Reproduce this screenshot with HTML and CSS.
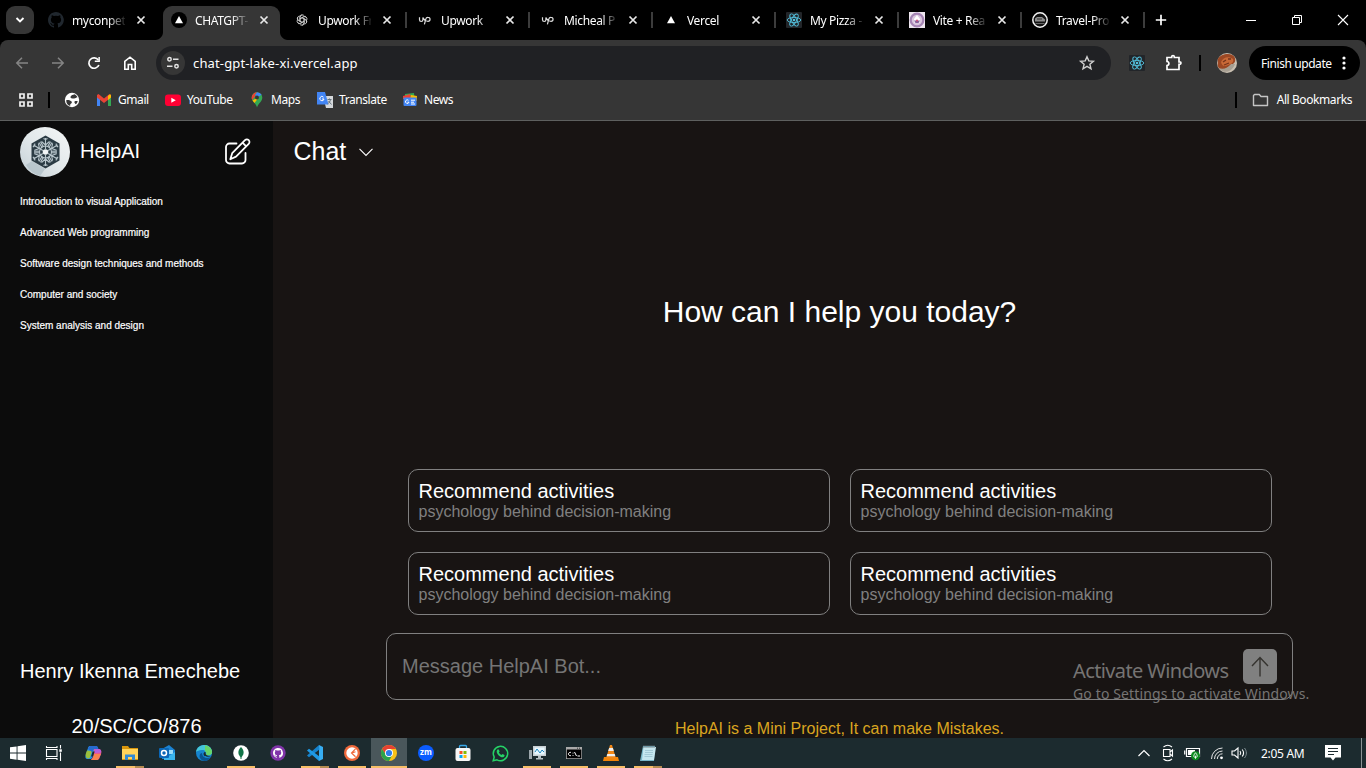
FILE: index.html
```html
<!DOCTYPE html>
<html lang="en">
<head>
<meta charset="utf-8">
<title>HelpAI</title>
<link rel="stylesheet" href="styles.css">
</head>
<body>
<svg width="0" height="0" class="defs">
  <defs>
    <symbol id="x" viewBox="0 0 16 16"><path d="M4.500 4.500l7 7M11.500 4.500l-7 7" stroke="#e8e8e8" stroke-width="1.700" fill="none"/></symbol>
    <symbol id="tri" viewBox="0 0 16 16"><path d="M8 4l4 7.200H4z" fill="#fff"/></symbol>
    <symbol id="cat" viewBox="0 0 16 16"><path d="M8 0C3.600 0 0 3.600 0 8c0 3.500 2.300 6.500 5.500 7.600.4.100.5-.2.500-.4v-1.500c-2.200.5-2.700-.9-2.700-.9-.4-.9-.9-1.200-.9-1.200-.7-.5.100-.5.100-.5.800.1 1.200.8 1.200.8.700 1.200 1.900.9 2.300.7.100-.5.300-.9.500-1.100-1.800-.2-3.600-.9-3.600-4 0-.9.300-1.600.8-2.100-.1-.2-.4-1 .1-2.100 0 0 .7-.2 2.200.8a7.500 7.500 0 014 0c1.500-1 2.200-.8 2.200-.8.400 1.100.2 1.900.1 2.100.5.600.8 1.300.8 2.100 0 3.100-1.900 3.700-3.700 3.900.3.300.6.800.6 1.500v2.200c0 .2.100.5.600.4A8 8 0 008 0z"/></symbol>
    <symbol id="up" viewBox="0 0 16 16"><path d="M2.500 5.300v2.500a1.700 1.700 0 003.400 0V5.600C6.700 7.500 7.500 8.600 8.900 9.200M7.400 12.400L8.800 7A2.200 2.200 0 0111 5.300a2 2 0 110 4.100C9.400 9.400 8.100 8.300 7.400 6.900" fill="none" stroke="#ddd" stroke-width="1.200"/></symbol>
    <symbol id="react" viewBox="0 0 16 16"><rect width="16" height="16" rx="1" fill="#222529"/><g fill="none" stroke="#53c1de" stroke-width=".9"><ellipse cx="8" cy="8" rx="6.800" ry="2.600"/><ellipse cx="8" cy="8" rx="6.800" ry="2.600" transform="rotate(60 8 8)"/><ellipse cx="8" cy="8" rx="6.800" ry="2.600" transform="rotate(120 8 8)"/></g><circle cx="8" cy="8" r="1.300" fill="#53c1de"/></symbol>
    <symbol id="gpt" viewBox="0 0 16 16"><g fill="none" stroke="#ccc" stroke-width="1"><g id="petal"><path d="M5.700 9.200V4.900A2.700 2.700 0 0110.700 3.500M5.700 6.600l3.900-2.300a2.700 2.700 0 013.700 1"/></g><use href="#petal" transform="rotate(60 8 8)"/><use href="#petal" transform="rotate(120 8 8)"/><use href="#petal" transform="rotate(180 8 8)"/><use href="#petal" transform="rotate(240 8 8)"/><use href="#petal" transform="rotate(300 8 8)"/></g></symbol>
  </defs>
</svg>

<header class="browser">
  <div class="tabstrip">
    <div class="tabmenu"><svg width="12" height="12" viewBox="0 0 12 12"><path d="M2.500 4l3.500 3.500L9.500 4" fill="none" stroke="#fff" stroke-width="1.900"/></svg></div>
    <div class="tab nosep"><svg class="fav" fill="#20272e"><use href="#cat"/></svg><span class="name">myconpet</span><svg class="close"><use href="#x"/></svg></div>
    <div class="tab active nosep"><svg class="fav"><circle cx="8" cy="8" r="8" fill="#000"/><use href="#tri"/></svg><span class="name">CHATGPT-</span><svg class="close"><use href="#x"/></svg></div>
    <div class="tab"><svg class="fav" viewBox="0 0 16 16"><g transform="translate(1 1) scale(.88)"><use href="#gpt" width="16" height="16"/></g></svg><span class="name">Upwork Fr</span><svg class="close"><use href="#x"/></svg></div>
    <div class="tab"><svg class="fav"><use href="#up"/></svg><span class="name">Upwork</span><svg class="close"><use href="#x"/></svg></div>
    <div class="tab"><svg class="fav"><use href="#up"/></svg><span class="name">Micheal P</span><svg class="close"><use href="#x"/></svg></div>
    <div class="tab"><svg class="fav"><use href="#tri"/></svg><span class="name">Vercel</span><svg class="close"><use href="#x"/></svg></div>
    <div class="tab"><svg class="fav"><use href="#react"/></svg><span class="name">My Pizza -</span><svg class="close"><use href="#x"/></svg></div>
    <div class="tab"><svg class="fav" viewBox="0 0 16 16"><path fill="#eee6ef" d="M0 0h16v16H0z"/><circle cx="8" cy="8" r="6.300" fill="#d9c6dd" stroke="#a584b4" stroke-width="2.200"/><path d="M8 3l3 4v3.500H5V7z" fill="#fff"/><path d="M5 8.500h6L9.500 11h-3z" fill="#85629c"/><circle cx="8" cy="8.500" r="1" fill="#d14e77"/></svg><span class="name">Vite + Rea</span><svg class="close"><use href="#x"/></svg></div>
    <div class="tab"><svg class="fav" viewBox="0 0 16 16"><circle cx="8" cy="8" r="7.200" fill="#121212" stroke="#f3f3f3" stroke-width="1.500"/><path d="M3 6.500l2-1.500h5l3 2.500v2H3z" fill="#8c8c8c"/><path d="M3.500 11.500h9" stroke="#666"/><path d="M5 7h5" stroke="#333"/></svg><span class="name">Travel-Pro</span><svg class="close"><use href="#x"/></svg></div>
    <svg class="plus" width="14" height="14"><path d="M7 1.800v10.400M1.800 7h10.400" stroke="#fff" stroke-width="1.700"/></svg>
    <div class="wincontrols">
      <svg width="12" height="12"><path d="M1 6.500h10" stroke="#fff"/></svg>
      <svg width="12" height="12"><path d="M1.500 3.500h7v7h-7zM3.500 3.500v-2h7v7h-2" stroke="#fff" fill="none"/></svg>
      <svg width="12" height="12"><path d="M1 1l10 10M11 1L1 11" stroke="#fff" stroke-width="1.100"/></svg>
    </div>
  </div>

  <div class="toolbar">
    <div class="nav">
      <svg width="16" height="16"><path d="M14 8H3M8 2.800L2.800 8 8 13.200" fill="none" stroke="#858585" stroke-width="1.500"/></svg>
      <svg width="16" height="16"><path d="M2 8h11M8 2.800L13.200 8 8 13.200" fill="none" stroke="#858585" stroke-width="1.500"/></svg>
      <svg width="16" height="16"><path d="M12.900 10A5.200 5.200 0 1112.300 5" fill="none" stroke="#fff" stroke-width="1.700"/><path d="M13.900 2v5H8.800V5.600h3.600V2z" fill="#fff"/></svg>
      <svg width="16" height="16"><path d="M2.800 6.300L8 2.200l5.200 4.100v7.900H9.700V9.500H6.300v4.700H2.800z" fill="none" stroke="#fff" stroke-width="1.600"/></svg>
    </div>
    <div class="omnibox">
      <span class="siteinfo"><svg width="14" height="14"><g fill="none" stroke="#e3e3e3" stroke-width="1.500"><circle cx="3.500" cy="3.300" r="1.700"/><path d="M7 3.300h5.500M1 10.200h5.500"/><circle cx="10.500" cy="10.200" r="1.700"/></g></svg></span>
      <span class="url">chat-gpt-lake-xi.vercel.app</span>
      <svg width="16" height="16" class="star"><path d="M8 1.700l1.800 4.200 4.600.4-3.500 3 1.100 4.500L8 11.400l-4 2.400 1.100-4.500-3.500-3 4.600-.4z" fill="none" stroke="#d0d0d0" stroke-width="1.400"/></svg>
    </div>
    <svg class="ext" width="16" height="16"><use href="#react"/></svg>
    <svg class="puzzle" width="18" height="18"><path d="M2 3.500h4.700V2.800a1.300 1.300 0 012.600 0v.7H14v4.300h.7a1.300 1.300 0 010 2.600H14v5.100H2v-4c2.500-.2 2.500-3.700 0-4z" fill="none" stroke="#fff" stroke-width="1.700"/></svg>
    <i class="vbar tbar"></i>
    <svg class="avatar" width="20" height="20" viewBox="0 0 20 20"><circle cx="10" cy="10" r="10" fill="#c9bfb1"/><path d="M.8 6C4 0 16-1 18 5c1 4-1 6-5 7.500C9 17 3 19 .8 13z" fill="#9c4824"/><path d="M4 9c2-5 8-6 12-3 1 3-1 5-5 6-4 2-6 1-7-3z" fill="#c96a38"/><path d="M6 9l3-2M11 6l3 0M7 12l5-2" stroke="#73331c" stroke-width="1.300"/><path d="M2 15c4 2 9 0 12-4l4 0c-2 6-10 12-16 4z" fill="#a79f92"/></svg>
    <div class="update"><span>Finish update</span><svg width="4" height="16"><g fill="#fff"><circle cx="2" cy="3" r="1.600"/><circle cx="2" cy="8" r="1.600"/><circle cx="2" cy="13" r="1.600"/></g></svg></div>
  </div>

  <div class="bookmarks">
    <svg class="grid" width="16" height="16"><path d="M2 2h4v4H2zM10 2h4v4h-4zM2 10h4v4H2zM10 10h4v4h-4z" fill="none" stroke="#f1f1f1" stroke-width="1.700"/></svg>
    <i class="vbar"></i>
    <svg class="globe" width="16" height="16"><circle cx="8" cy="8" r="7.200" fill="#fff"/><path d="M2.200 8.200c2.300-.5 3.600.3 5 1 1.200.7.700 2-.4 2.600-.8.500-.6 1.500-.6 2.200C3.800 13.300 2 11 2.200 8.200zM6.500 4.800c.7-1.600 2.500-2 4-2.500 1.200.5 2.400 1.700 3 3-1.500.2-2 1.200-3.300 1.300S6 6.500 6.500 4.800zM10.500 9.500c1-.8 2.200-.5 3.200-.5-.2 1.200-.8 2.300-1.700 3.200-1-.5-2-1.700-1.500-2.700z" fill="#363636"/></svg>
    <span class="bm gmail"><svg width="16" height="16"><path d="M1 4v10h3V7z" fill="#4285f4"/><path d="M12 7v7h3V4z" fill="#34a853"/><path d="M1 3l1.500-1L8 6.600 13.500 2l1.500 1v2.500L8 11 1 5.500z" fill="#ea4335"/><path d="M12 4v4l3-2.500V3.500C15 2 13.500 2 12 4z" fill="#fbbc04"/></svg><b>Gmail</b></span>
    <span class="bm yt"><svg width="16" height="16"><rect y="2.500" width="16" height="11.500" rx="3" fill="#f03"/><path d="M6.300 5.800v5l4.500-2.500z" fill="#fff"/></svg><b>YouTube</b></span>
    <span class="bm maps"><svg width="16" height="16"><path d="M2.700 5.500a5.300 5.300 0 0110.600 0c0 4.500-4.100 5.500-5.300 10-.8-4.500-5.300-5.500-5.300-10z" fill="#34a853"/><path d="M4 2.200A5.300 5.300 0 018 .2L5 5z" fill="#ea4335"/><path d="M4 2.200L6.500 4l-3.300 4A5.500 5.500 0 014 2.200z" fill="#ea4335"/><path d="M8 .2a5.300 5.300 0 014.600 2.600L9 5 6 3z" fill="#4285f4"/><path d="M3.500 8.500L10 5l-4.500 6z" fill="#fbbc04"/><circle cx="8" cy="5.600" r="2" fill="#363636"/></svg><b>Maps</b></span>
    <span class="bm trans"><svg width="16" height="16"><path d="M6 4h10v12H9z" fill="#d5d8db"/><path d="M0 0h8l3.500 12.500H0z" fill="#4285f4"/><path d="M6.500 5.200A2.100 2.100 0 107 7H5" fill="none" stroke="#fff" stroke-width="1"/><path d="M10.500 7.500h4M12.500 6.500v1M13.500 7.500c-.3 2-1.500 3.500-3 4.500M11.500 9l3 3.500" fill="none" stroke="#64727d"/></svg><b>Translate</b></span>
    <span class="bm news"><svg width="16" height="16"><path d="M3 2l9-1 .5 5H3z" fill="#34a853"/><path d="M1 4l7-2 2 5H1z" fill="#ea4335"/><path d="M9 3l6 1-.5 5H8z" fill="#fbbc04"/><rect x="1.500" y="5.500" width="13" height="8.500" rx="1" fill="#4285f4"/><path d="M6.500 8.300A1.800 1.800 0 107 10.200H5.500M9 8.200h4M9 10.200h3M9 12h4" fill="none" stroke="#fff" stroke-width="1"/></svg><b>News</b></span>
    <div class="allbm"><i class="vbar"></i><svg width="18" height="16"><path d="M2.500 2.500h4.800l1.700 2h6.500v9H1.500v-10z" fill="none" stroke="#c5c5c5" stroke-width="1.400" stroke-linejoin="round"/></svg><b>All Bookmarks</b></div>
  </div>
</header>

<div class="app">
  <aside class="side">
    <div class="brand">
      <svg class="logo" width="50" height="50" viewBox="0 0 50 50"><defs><linearGradient id="lg" x1="0" y1="1" x2="1" y2="0"><stop offset="0" stop-color="#c4d0d6"/><stop offset=".5" stop-color="#e3e9eb"/><stop offset="1" stop-color="#f4f6f6"/></linearGradient></defs><circle cx="25" cy="25" r="25" fill="url(#lg)"/><path d="M12 34l13 8-5 7A25 25 0 016 38z" fill="#a9b9c2" opacity=".6"/><path d="M25.500 8.500l14 8v17l-14 8-14-8v-17z" fill="#2b3b44"/><g fill="none" stroke="#b9c6cc" stroke-width="1.100"><path id="arm" d="M25.500 22v-11M25.500 18l-4-3.500M25.500 18l4-3.500M22 20.500l-3-5M29 20.500l3-5M25.500 12.500l-2-1M25.500 12.500l2-1"/><use href="#arm" transform="rotate(60 25.500 25)"/><use href="#arm" transform="rotate(120 25.500 25)"/><use href="#arm" transform="rotate(180 25.500 25)"/><use href="#arm" transform="rotate(240 25.500 25)"/><use href="#arm" transform="rotate(300 25.500 25)"/><circle cx="25.500" cy="25" r="6"/></g><circle cx="25.500" cy="25" r="2.800" fill="#f2f5f6"/></svg>
      <span class="title">HelpAI</span>
      <svg class="edit" width="28" height="28" viewBox="0 0 28 28"><g fill="none" stroke="#fff" stroke-width="1.800" stroke-linejoin="round" stroke-linecap="round"><path d="M12.500 5.500H5.500A3.500 3.500 0 002 9v13a3.500 3.500 0 003.500 3.500h12.500a3.500 3.500 0 003.500-3.500v-7"/><path d="M6.300 21.200l1.900-6L21 2.200a2.600 2.600 0 013.700 3.700L12 18.600zM18.500 4.600l3.700 3.700"/></g></svg>
    </div>
    <ul class="history">
      <li>Introduction to visual Application</li>
      <li>Advanced Web programming</li>
      <li>Software design techniques and methods</li>
      <li>Computer and society</li>
      <li>System analysis and design</li>
    </ul>
    <div class="owner"><p>Henry Ikenna Emechebe</p><p class="reg">20/SC/CO/876</p></div>
  </aside>
  <main class="main">
    <div class="chathead"><span>Chat</span><svg width="16" height="16"><path d="M1.500 4.900L8 11.400l6.500-6.500" fill="none" stroke="#fff" stroke-width="1.100"/></svg></div>
    <div class="welcome">
      <h1>How can I help you today?</h1>
      <div class="cards">
        <div class="card"><h2>Recommend activities</h2><p>psychology behind decision-making</p></div>
        <div class="card"><h2>Recommend activities</h2><p>psychology behind decision-making</p></div>
        <div class="card"><h2>Recommend activities</h2><p>psychology behind decision-making</p></div>
        <div class="card"><h2>Recommend activities</h2><p>psychology behind decision-making</p></div>
      </div>
      <div class="composer"><span>Message HelpAI Bot...</span><div class="send"><svg width="20" height="22"><path d="M10 20.500V2M2 10l8-8.500 8 8.500" fill="none" stroke="#35332f" stroke-width="1.400"/></svg></div></div>
      <p class="note">HelpAI is a Mini Project, It can make Mistakes.</p>
    </div>
  </main>
  <div class="watermark"><p class="w1">Activate Windows</p><p class="w2">Go to Settings to activate Windows.</p></div>
</div>

<footer class="taskbar">
  <div class="task"><svg width="16" height="16"><path d="M0 2.300L6.600 1.400v6.200H0zM7.500 1.200L16 0v7.600H7.500zM0 8.500h6.600v6.200L0 13.800zM7.500 8.500H16V16l-8.500-1.200z" fill="#fff"/></svg></div>
  <div class="task tv"><svg width="16" height="16"><g fill="none" stroke="#fff" stroke-width="1.100"><path d="M.5 4.500h10.500v7H.5zM.5 1v1.500H11V1M.5 15v-1.500H11V15M14.500 0v3.500M14.500 7.500V16"/></g><path d="M13.300 4.300h2.500v2.500h-2.500z" fill="#fff"/></svg></div>
  <div class="task"><svg width="18" height="18" viewBox="0 0 18 18"><path d="M6 2h6c1 0 1.500 1 2 2.500L11 6 8.500 13c-.5 1.500-1 2-3 2H4c-3 0-3-2-2-5l2-6c.5-1.500 1-2 2-2z" fill="#2490e6"/><path d="M1.700 10l1.300-3.500L8 7l-2 6.500C5 15.500 1 15 1.700 10z" fill="#9bbf3c"/><path d="M6.500 2H12c1.500 0 2 1 2.500 3H10L8 8 4 5c.5-1.500 1-3 2.500-3z" fill="#276acf"/><path d="M10 5h4c3 0 4 2 3 5l-1.500 4c-.5 1.500-1.500 2-3 2H7l2-3z" fill="#e8578e"/><path d="M7 16c2-1 2-3 3-6l7 0-2 4c-.5 1.500-1.500 2-3 2z" fill="#f78250"/><path d="M10.500 5h4c2 0 3 1.500 2.500 3.500L11 9z" fill="#b65edc"/><path d="M8.700 7.500h2L9 12.500H7z" fill="#1c2b2f"/></svg></div>
  <div class="task run two"><svg width="17" height="16"><path d="M0 1h6l1.500 2H16v12H0z" fill="#d8960d"/><path d="M0 4h16v10H0z" fill="#ffd35a"/><path d="M3 15V9.500h10V15h-3v-3H6v3z" fill="#3289d2"/></svg></div>
  <div class="task"><svg width="17" height="16"><path d="M3 4l7-4 6 5v9H3z" fill="#1b83d3"/><path d="M5 5h9v4H5z" fill="#9bdcf8"/><path d="M5 8l5 3 6-4v8H5z" fill="#39b5ed"/><rect y="3" width="10" height="10" rx="1" fill="#0a67b7"/><circle cx="5" cy="8" r="2.500" fill="none" stroke="#fff" stroke-width="1.500"/></svg></div>
  <div class="task"><svg width="16" height="16"><circle cx="8" cy="8" r="8" fill="#1584ce"/><path d="M0 7C1-1 14-3 16 6c.5 4-3 5-6 4 1-3-1-5-4-5S1 6 0 7z" fill="#45c6d8"/><path d="M9 .2C13 1 15 3 16 6c.5 4-3 5-6 4 1-2 0-3-1-4z" fill="#67d569"/><path d="M6 8c0 4 4 6 8.500 4.500C12 17 6 17 4 13 3 11 4 8 6 8z" fill="#0a5390"/><path d="M9.500 7c-2 0-2.500 2-1.500 3.500S13 12 15 11c-2 0-6 0-5.500-4z" fill="#1c2b2f"/></svg></div>
  <div class="task run"><svg width="16" height="16"><circle cx="8" cy="8" r="7.800" fill="#fff"/><path d="M8 2c4 4 3 8 0 10.500C5 10 4 6 8 2z" fill="#127448"/><path d="M8 9v5" stroke="#127448"/></svg></div>
  <div class="task"><svg width="16" height="16" viewBox="0 0 16 16"><circle cx="8" cy="8" r="7.700" fill="#8034a9"/><g transform="translate(3 3) scale(.63)" fill="#fff"><use href="#cat" width="16" height="16"/></g></svg></div>
  <div class="task run two"><svg width="17" height="16"><path d="M12 0l4 2v12l-4 2z" fill="#37aef3"/><path d="M12 0L0 10.500l2 1.700L12.500 4.500z" fill="#1683cc"/><path d="M12 16L0 5.500l2-1.700 10.500 7.700z" fill="#1f99e4"/></svg></div>
  <div class="task run"><svg width="16" height="16"><circle cx="8" cy="8" r="8" fill="#f0693b"/><circle cx="8" cy="8" r="5.700" fill="#fff"/><path d="M11.500 3.800L7.500 8l4 3.800M8 8l3.500-1.200" fill="none" stroke="#f0693b" stroke-width="1.200"/></svg></div>
  <div class="task current"><svg width="16" height="16"><circle cx="8" cy="8" r="8" fill="#fbc116"/><path d="M1.070 4A8 8 0 0114.930 4H8L5 9.700z" fill="#e64234"/><path d="M1.070 4A8 8 0 008 16l3.500-6.200H5z" fill="#2ba24c"/><circle cx="8" cy="8" r="4" fill="#fff"/><circle cx="8" cy="8" r="3.100" fill="#2e7de9"/></svg></div>
  <div class="task"><span class="zoomapp">zm</span></div>
  <div class="task"><svg width="16" height="16"><path d="M4.500 4V1.500a1 1 0 011-1h5a1 1 0 011 1V4" fill="none" stroke="#38a8e8" stroke-width="1.300"/><rect x=".5" y="3" width="15" height="13" rx="2" fill="#f7f7f7"/><path fill="#f35325" d="M4.500 6H7.500v3h-3z"/><path fill="#81bc06" d="M8.500 6h3v3h-3z"/><path fill="#05a6f0" d="M4.500 10h3v3h-3z"/><path fill="#ffba08" d="M8.500 10h3v3h-3z"/></svg></div>
  <div class="task"><svg width="17" height="17"><path d="M1.200 15.800l1-3.800A7.200 7.200 0 115 14.800z" fill="none" stroke="#25d366" stroke-width="1.500"/><path d="M5.500 4.500h1.300l.8 2-.8 1c.6 1.200 1.500 2 2.700 2.500l1-1 2 1v1c-.7 1.500-2.500 1.500-4 .7C6.300 10.500 5 8.500 4.700 7c0-1 .2-2 .8-2.500z" fill="#25d366"/></svg></div>
  <div class="task run"><svg width="17" height="16"><path d="M0 5h3v9H0z" fill="#9ca6ab"/><path d="M4 1h13v10H4z" fill="#c8d0d4"/><path d="M5.500 2.500h10v7h-10z" fill="#e7f8ff"/><path d="M6 7l2-3 3 4 2-3 2 2" fill="none" stroke="#2387bd"/><path d="M9 11h3v2h2v1.500H7V13h2z" fill="#b6bfc3"/></svg></div>
  <div class="task run"><svg width="16" height="14"><path d="M0 1h16v12H0z" fill="#aaa"/><path d="M.8 3.500h14.500v8.800H.8z" fill="#000"/><path d="M5 6.500a1.700 1.700 0 100 3M7 6.700v.8M7 9v.8M8.500 6l2 4M11.500 10h2.500" fill="none" stroke="#fff"/><path d="M11 2.200h1M13 2.200h1" stroke="#333"/></svg></div>
  <div class="task run"><svg width="16" height="16"><path d="M1 12h14l1 4H0z" fill="#f28408"/><path d="M7 0h2l4 13.500H3z" fill="#f18717"/><path d="M6.100 3h3.800l.9 3H5.200zM4.300 9h7.400l.7 2.200H3.600z" fill="#eee"/></svg></div>
  <div class="task run two"><svg width="17" height="16"><path d="M3 1h12l-1 15H0z" fill="#78b7c8"/><path d="M3.500 2H16l-2 13H2z" fill="#c5e7ef"/><path d="M4 0v3M6 0v3M8 0v3M10 0v3M12 0v3M14 0v3" stroke="#626d72" stroke-width=".8"/><path d="M5 5.500h8M5 7.500h8M4.500 9.500h8M4.500 11.500h8" stroke="#8bb7c4" stroke-width=".6"/></svg></div>
  <div class="tray">
    <svg width="14" height="14"><path d="M1.500 10L7 4.500l5.500 5.500" fill="none" stroke="#fff" stroke-width="1.200"/></svg>
    <svg class="meet" width="14" height="18"><path d="M2.500 5.500h6.500v7H2.500zM9 8l2.500-2v6L9 10M2.500 3C5 1 8.500 1 11 3M2.500 15c2.500 2 6 2 8.500 0" fill="none" stroke="#fff" stroke-width="1.100"/></svg>
    <svg class="bat" width="17" height="14"><path d="M2.500 2.500h13v8h-13zM.7 4.500v4" fill="none" stroke="#fff" stroke-width="1.200"/><path d="M4 4h7v5H4z" fill="#fff"/><circle cx="11.500" cy="9.700" r="4.500" fill="#0c8a20"/><path d="M11.500 6.700c2.500 3 2 4.500 0 5-2-.5-2.500-2 0-5zM11.500 9.700v3" fill="none" stroke="#fff" stroke-width=".9"/></svg>
    <svg class="wifi" width="14" height="14"><g fill="none" stroke="#e6e6e6" stroke-width="1"><path d="M1.500 13A11 11 0 0112.500 2M4.500 13a8 8 0 018-8M7.300 13a5.200 5.200 0 015.200-5.200"/></g><circle cx="11.500" cy="11.800" r="1.400" fill="#fff"/></svg>
    <svg class="vol" width="17" height="14"><path d="M1 5h2.500L7 2v10L3.500 9H1zM9 5c1 1.300 1 2.700 0 4M11.200 3.500c1.800 2.300 1.800 4.700 0 7" fill="none" stroke="#fff" stroke-width="1.100"/><path d="M13.500 2c2.500 3.300 2.500 6.700 0 10" fill="none" stroke="#839095"/></svg>
    <span class="clock">2:05 AM</span>
    <svg class="notif" width="16" height="16"><path d="M0 0h16v12.500h-5.500L8 15.500l-2.500-3H0z" fill="#fff"/><path d="M3 3.500h10M3 6.500h10M3 9.500h6" stroke="#1c2b2f"/></svg>
    <i class="peek"></i>
  </div>
</footer>
</body>
</html>
```
FILE: styles.css
```css
* { box-sizing: border-box; margin: 0; padding: 0; }
body { width: 1366px; height: 768px; overflow: hidden; display: flex; flex-direction: column; background: #000; color: #fff; font-family: "Liberation Sans", Arial, sans-serif; }
svg { display: block; flex: none; overflow: visible; }
.defs { position: absolute; }
i { flex: none; }
.browser { height: 121px; flex: none; border-bottom: 1px solid #5e605f; font: 12px "Noto Sans", sans-serif; letter-spacing: -.35px; background: #363636; }
.browser b { font-weight: 400; }

.tabstrip { height: 40px; display: flex; align-items: center; background: #000; padding-left: 6px; }
.tabmenu { width: 28px; height: 28px; border-radius: 9px; background: #363636; display: grid; place-items: center; margin-right: 6px; }
.tab { width: 123px; height: 34px; margin-top: 6px; padding: 0 0 6px 8px; display: flex; align-items: center; flex: none; background: linear-gradient(#3c3c3c, #3c3c3c) no-repeat 119px 6px / 2px 16px; }
.tab.nosep { background: none; }
.tab.active { position: relative; background: none; z-index: 0; }
.tab.active::before { content: ""; position: absolute; z-index: -1; left: 0; top: 0; width: 117px; height: 34px; background: #363636; border-radius: 9px 9px 0 0; }
.tab.active::after { content: ""; position: absolute; z-index: -1; left: -8px; bottom: 0; width: 133px; height: 8px; background: radial-gradient(circle at 0 0, transparent 7.500px, #363636 8.500px) no-repeat left / 8px 8px, radial-gradient(circle at 100% 0, transparent 7.500px, #363636 8.500px) no-repeat right / 8px 8px; }
.fav { width: 16px; height: 16px; }
.name { width: 53px; margin-left: 8px; white-space: nowrap; -webkit-mask-image: linear-gradient(90deg, #000 36px, transparent 55px); mask-image: linear-gradient(90deg, #000 36px, transparent 55px); }
.close { width: 16px; height: 16px; margin-left: 8px; }
.plus { margin-left: 7px; }
.wincontrols { margin-left: auto; display: flex; gap: 34px; padding-right: 17px; }

.toolbar { height: 46px; display: flex; align-items: center; padding-left: 14px; background: #363636; border-radius: 8px 8px 0 0; box-shadow: 0 -8px 0 0 #000; }
.nav { display: flex; gap: 20px; width: 142px; }
.omnibox { width: 955px; height: 34px; border-radius: 17px; background: #202124; display: flex; align-items: center; padding: 0 16px 0 5px; }
.siteinfo { width: 24px; height: 24px; border-radius: 50%; background: #363636; display: grid; place-items: center; }
.url { font-size: 13px; margin-left: 8px; letter-spacing: .14px; }
.star { margin-left: auto; }
.ext { margin-left: 18px; }
.puzzle { margin-left: 20px; }
.vbar { width: 2px; height: 16px; background: #000; display: block; }
.tbar { margin-left: 16px; }
.avatar { margin-left: 16px; }
.update { margin-left: 12px; width: 111px; height: 34px; border-radius: 17px; background: #000; display: flex; align-items: center; justify-content: space-between; padding: 0 14px 0 12px; white-space: nowrap; letter-spacing: -.42px; }

.bookmarks { height: 34px; padding: 0 14px 7px 18px; display: flex; align-items: center; white-space: nowrap; letter-spacing: -.42px; }
.grid { margin-right: 14px; }
.globe { margin-left: 14px; }
.bm { display: flex; gap: 6px; align-items: center; flex: none; }
.gmail { margin-left: 16px; width: 69px; }
.yt { width: 84px; }
.maps { width: 68px; }
.trans { width: 85px; }
.allbm { margin-left: auto; display: flex; align-items: center; }
.allbm svg { margin: 0 7px 0 15px; }

.app { flex: 1; min-height: 0; display: flex; position: relative; background: #181413; }
.side { width: 273px; background: #0c0c0c; display: flex; flex-direction: column; padding: 6px 20px 0; overflow: hidden; }
.brand { display: flex; align-items: center; height: 50px; }
.title { font-size: 20px; margin: 0 0 2px 10px; }
.edit { margin-left: auto; margin-right: 1px; }
.history { list-style: none; font-size: 10px; line-height: 11px; margin-top: 19px; display: flex; flex-direction: column; gap: 20px; -webkit-text-stroke: .2px #fff; }
.owner { margin-top: auto; font-size: 20px; line-height: 23px; white-space: nowrap; }
.reg { text-align: center; margin: 32px -20px 0; }

.main { flex: 1; }
.chathead { display: flex; align-items: center; gap: 12px; height: 61px; padding-left: 20.500px; font-size: 25px; }
.welcome { display: flex; flex-direction: column; align-items: center; padding-left: 40px; }
h1 { font-size: 30px; font-weight: 400; line-height: 34px; margin-top: 113px; }
.cards { display: grid; grid-template-columns: 422px 422px; gap: 20px; margin-top: 140px; }
.card { height: 63px; border: 1px solid #808080; border-radius: 10px; padding: 10px; }
.card h2 { font-size: 20px; line-height: 23px; font-weight: 400; }
.card p { font-size: 16px; line-height: 18px; color: #808080; }
.composer { width: 907px; height: 67px; margin-top: 18px; border: 1px solid #808080; border-radius: 10px; display: flex; align-items: center; justify-content: space-between; padding: 0 15px; font-size: 20px; color: #757575; }
.send { width: 34px; height: 35px; border-radius: 5px; background: #808080; display: grid; place-items: center; }
.note { font-size: 16px; line-height: 18px; margin-top: 20px; color: #daa520; }
.watermark { position: absolute; left: 1073px; top: 537px; font-family: "Noto Sans", sans-serif; color: #767473; white-space: nowrap; }
.w1 { font-size: 20px; line-height: 26px; letter-spacing: -.62px; }
.w2 { font-size: 14px; line-height: 19px; letter-spacing: .13px; }

.taskbar { height: 30px; flex: none; background: #1c2b2f; display: flex; gap: 1px; }
.task { width: 36px; height: 30px; flex: none; display: grid; place-items: center; }
.tv { margin-left: -1px; margin-right: 2px; }
.run { background: linear-gradient(#f7bf68, #f7bf68) no-repeat center bottom / 28px 2px; }
.two { background: linear-gradient(90deg, #f7bf68 19px, #b48b50 19px) no-repeat center bottom / 28px 2px; }
.current { background: linear-gradient(#f7bf68, #f7bf68) no-repeat center bottom / 36px 2px, #4a575b; }
.zoomapp { width: 16px; height: 16px; border-radius: 50%; background: #0b5cff; font: bold 8px/14px "Open Sans", sans-serif; text-align: center; }
.tray { margin-left: auto; display: flex; align-items: center; width: 229px; }
.meet { margin-left: 10px; }
.bat { margin-left: 9px; }
.wifi { margin-left: 9px; }
.vol { margin-left: 7px; }
.clock { width: 44px; margin-left: 13px; white-space: nowrap; font: 12px "Noto Sans", sans-serif; letter-spacing: -.3px; }
.notif { margin-left: 20px; }
.peek { width: 1px; height: 30px; background: #8a9395; margin-left: 20px; }
```
